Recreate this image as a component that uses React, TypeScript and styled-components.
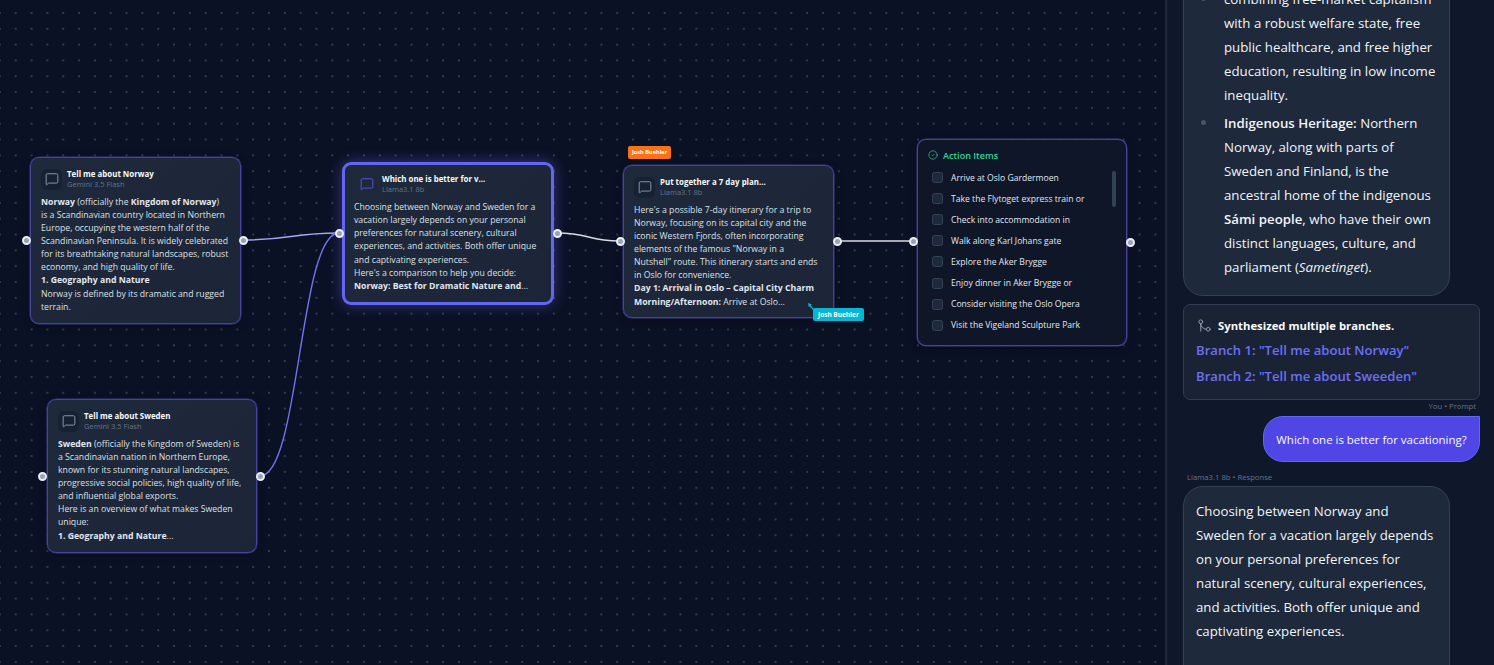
import React from "react";
import styled, { createGlobalStyle } from "styled-components";
import { MessageSquare, CircleCheck, GitMerge } from "lucide-react";

const Global = createGlobalStyle`
  html, body { margin: 0; padding: 0; height: 100%; background: #0b1122; overflow: hidden; }
  #root { height: 100%; }
  * { box-sizing: border-box; }
`;
const FONT = `"Open Sans", "Noto Sans", "Liberation Sans", sans-serif`;

const Page = styled.div`
  display: flex; width: 1494px; height: 665px; overflow: hidden; font-family: ${FONT};
`;
const Canvas = styled.div`
  position: relative; flex: 0 0 1165px; height: 100%; overflow: hidden;
  background-color: #0b1124;
  background-image: radial-gradient(circle, #2f3a4e 0.8px, transparent 1.05px);
  background-size: 15.84px 15.84px;
  background-position: -8px 5px;
`;
const Edges = styled.svg`position: absolute; inset: 0; width: 1165px; height: 665px;`;

const Node = styled.div<{ $x: number; $y: number; $w: number; $h: number; $active?: boolean; $dark?: boolean }>`
  position: absolute; left: ${p => p.$x}px; top: ${p => p.$y}px; width: ${p => p.$w}px; height: ${p => p.$h}px;
  border-radius: 9px;
  background: ${p => (p.$dark ? "#0e1628" : "linear-gradient(135deg, #1e293b, #1c2537)")};
  border: ${p => (p.$active ? "3px solid #6366f1" : "1px solid #44449f")};
  box-shadow: ${p => (p.$active ? "0 0 14px rgba(99,102,241,.45)" : "0 0 0 0.5px #3a3b8c, 0 2px 8px rgba(0,0,0,.3)")};
  padding: ${p => (p.$active ? "7px 9px" : "9px 10px")};
  color: #d1d5db;
`;
const Head = styled.div<{ $active?: boolean }>`
  display: flex; align-items: center; gap: 6px; height: 24px; margin-bottom: ${p => (p.$active ? "5px" : "4.5px")};
`;
const IconBox = styled.div<{ $active?: boolean }>`
  width: 21px; height: 21px; border-radius: 6px; display: flex; align-items: center; justify-content: center;
  background: ${p => (p.$active ? "transparent" : "#182132")};
  color: ${p => (p.$active ? "#5b5cf0" : "#94a3b8")};
  margin-left: ${p => (p.$active ? "2px" : "0")};
`;
const Titles = styled.div`display: flex; flex-direction: column; margin-left: -1px;`;
const Title = styled.div`font-size: 7.9px; line-height: 10.5px; font-weight: 700; color: #f8fafc; white-space: nowrap;`;
const Model = styled.div`font-size: 7.5px; line-height: 10.5px; color: #64748b; white-space: nowrap;`;
const Body = styled.div`font-size: 8.7px; line-height: 13.15px; color: #dbe0e7; white-space: nowrap;`;
const B = styled.b`font-weight: 700; color: #e2e8f0;`;

const Handle = styled.div<{ $x: number; $y: number }>`
  position: absolute; left: ${p => p.$x - 4.5}px; top: ${p => p.$y - 4.5}px; width: 9px; height: 9px; border-radius: 50%;
  background: #94a3b8; border: 2.4px solid #eceef2;
`;
const Tag = styled.div<{ $x: number; $y: number; $bg: string; $big?: boolean }>`
  position: absolute; left: ${p => p.$x}px; top: ${p => p.$y}px; height: ${p => (p.$big ? "13px" : "12.5px")};
  padding: ${p => (p.$big ? "0 5px" : "0 4px")};
  display: flex; align-items: center; border-radius: 2px; background: ${p => p.$bg};
  font-size: ${p => (p.$big ? "6.5px" : "5.6px")}; font-weight: 700; color: #fff; white-space: nowrap;
`;
const Cursor = styled.svg`position: absolute; left: 807px; top: 302px; width: 9px; height: 9px;`;

const ActionHead = styled.div`
  display: flex; align-items: center; gap: 5px; color: #34d399; font-size: 9.1px; font-weight: 600;
  height: 12px; margin: 0 0 6px 0;
`;
const ActionList = styled.div`display: flex; flex-direction: column; padding-left: 4px;`;
const ActionRow = styled.div`display: flex; align-items: center; gap: 8px; height: 21.1px; font-size: 8.6px; color: #e2e8f0; white-space: nowrap;`;
const Check = styled.div`width: 11px; height: 11px; border-radius: 2.5px; background: #1e293b; border: 1px solid #334155;`;
const Thumb = styled.div`position: absolute; right: 10px; top: 31px; width: 4px; height: 36px; border-radius: 2px; background: #334155;`;

const Side = styled.aside`
  flex: 1; height: 100%; overflow: hidden; background: #0f172a; border-left: 2px solid #1e293b;
  padding: 0 14px 0 16px; color: #f1f5f9;
`;
const Scroll = styled.div`display: flex; flex-direction: column; margin-top: -26px;`;
const Bubble = styled.div<{ $tall?: boolean }>`
  width: 267px; background: #1e293b; border: 1px solid #334155; border-radius: 20px; padding: 12px;
  font-size: 13.25px; line-height: 24px; color: #f1f5f9; height: ${p => (p.$tall ? "300px" : "auto")};
  b { font-weight: 600; }
`;
const List = styled.ul`margin: 0; padding: 0 0 0 28px; list-style: none;`;
const Item = styled.li`
  position: relative; margin-bottom: 4px;
  &::before { content: ""; position: absolute; left: -23px; top: 9px; width: 5px; height: 5px; border-radius: 50%; background: #475569; }
`;
const Synth = styled.div`
  margin-top: 8px; width: 297px; height: 96px; border: 1px solid #2f3c52; border-radius: 7px; background: #1a2333;
  padding: 10px 12px; display: flex; flex-direction: column;
`;
const SynthHead = styled.div`display: flex; align-items: center; gap: 6px; font-size: 11.3px; font-weight: 700; height: 21px; margin-bottom: 2px; color: #f8fafc;`;
const SynthIcon = styled.span`display: inline-flex; color: #94a3b8; margin-left: 1px;`;
const BranchLink = styled.div`font-size: 13.1px; font-weight: 600; color: #6d6ff5; height: 26px; line-height: 26px;`;
const Meta = styled.div<{ $right?: boolean }>`
  font-size: 7.7px; color: #64748b; height: 15px; line-height: 12px; margin-top: ${p => (p.$right ? "0" : "9px")};
  text-align: ${p => (p.$right ? "right" : "left")}; padding: ${p => (p.$right ? "0 4px 0 0" : "0 0 0 4px")};
`;
const UserBubble = styled.div`
  align-self: flex-end; height: 46px; width: 217px; margin-top: 1px; border-radius: 20px 0 20px 20px; background: #4f46e5;
  border: 1px solid #6366f1; font-size: 11.45px; color: #f8fafc; display: flex; align-items: center; justify-content: center;
`;

const actions = ["Arrive at Oslo Gardermoen","Take the Flytoget express train or","Check into accommodation in","Walk along Karl Johans gate","Explore the Aker Brygge","Enjoy dinner in Aker Brygge or","Consider visiting the Oslo Opera","Visit the Vigeland Sculpture Park"];

export default function App() {
  return (
    <Page>
      <Global />
      <Canvas>
        <Edges viewBox="0 0 1165 665" fill="none">
          <path d="M243 240 C 290 240, 292 233, 339 233" stroke="#a5a6f6" strokeWidth="1.6" />
          <path d="M260 476 C 300 476, 299 233, 339 233" stroke="#7073f0" strokeWidth="1.4" />
          <path d="M557 233 C 590 233, 587 241, 620 241" stroke="#d8dbe2" strokeWidth="1.4" />
          <path d="M837 241 L 913 241" stroke="#d8dbe2" strokeWidth="1.4" />
        </Edges>

        <Node $x={30} $y={157} $w={211} $h={167}>
          <Head><IconBox><MessageSquare size={14} strokeWidth={1.5} /></IconBox><Titles><Title>Tell me about Norway</Title><Model>Gemini 3.5 Flash</Model></Titles></Head>
          <Body>
            <B>Norway</B> (officially the <B>Kingdom of Norway</B>)<br />is a Scandinavian country located in Northern<br />Europe, occupying the western half of the<br />Scandinavian Peninsula. It is widely celebrated<br />for its breathtaking natural landscapes, robust<br />economy, and high quality of life.<br /><B>1. Geography and Nature</B><br />Norway is defined by its dramatic and rugged<br />terrain.
          </Body>
        </Node>

        <Node $x={47} $y={399} $w={210} $h={154}>
          <Head><IconBox><MessageSquare size={14} strokeWidth={1.5} /></IconBox><Titles><Title>Tell me about Sweden</Title><Model>Gemini 3.5 Flash</Model></Titles></Head>
          <Body>
            <B>Sweden</B> (officially the Kingdom of Sweden) is<br />a Scandinavian nation in Northern Europe,<br />known for its stunning natural landscapes,<br />progressive social policies, high quality of life,<br />and influential global exports.<br />Here is an overview of what makes Sweden<br />unique:<br /><B>1. Geography and Nature</B>...
          </Body>
        </Node>

        <Node $x={342} $y={162} $w={212} $h={143} $active>
          <Head $active><IconBox $active><MessageSquare size={14} strokeWidth={1.5} /></IconBox><Titles><Title>Which one is better for v...</Title><Model>Llama3.1 8b</Model></Titles></Head>
          <Body>
            Choosing between Norway and Sweden for a<br />vacation largely depends on your personal<br />preferences for natural scenery, cultural<br />experiences, and activities. Both offer unique<br />and captivating experiences.<br />Here's a comparison to help you decide:<br /><B>Norway: Best for Dramatic Nature and</B>...
          </Body>
        </Node>

        <Node $x={623} $y={165} $w={211} $h={153}>
          <Head><IconBox><MessageSquare size={14} strokeWidth={1.5} /></IconBox><Titles><Title>Put together a 7 day plan...</Title><Model>Llama3.1 8b</Model></Titles></Head>
          <Body>
            Here's a possible 7-day itinerary for a trip to<br />Norway, focusing on its capital city and the<br />iconic Western Fjords, often incorporating<br />elements of the famous "Norway in a<br />Nutshell" route. This itinerary starts and ends<br />in Oslo for convenience.<br /><B>Day 1: Arrival in Oslo – Capital City Charm</B><br /><B>Morning/Afternoon:</B> Arrive at Oslo...
          </Body>
        </Node>

        <Node $x={917} $y={139} $w={210} $h={207} $dark>
          <ActionHead><CircleCheck size={10} strokeWidth={1.6} />Action Items</ActionHead>
          <ActionList>
            {actions.map(a => <ActionRow key={a}><Check />{a}</ActionRow>)}
          </ActionList>
          <Thumb />
        </Node>

        <Handle $x={26} $y={240} /><Handle $x={243} $y={240} />
        <Handle $x={42} $y={476} /><Handle $x={260} $y={476} />
        <Handle $x={339} $y={233} /><Handle $x={557} $y={233} />
        <Handle $x={620} $y={241} /><Handle $x={837} $y={241} />
        <Handle $x={913} $y={241} /><Handle $x={1130} $y={242} />

        <Tag $x={628} $y={146} $bg="#f97316">Josh Buehler</Tag>
        <Tag $x={813} $y={308} $bg="#06b6d4" $big>Josh Buehler</Tag>
        <Cursor viewBox="0 0 9 9"><path d="M1 1 L4.5 2.2 L3.6 3.4 L7 7 L6 8 L2.7 4.4 L1.8 5 Z" fill="#06b6d4" /></Cursor>
      </Canvas>
      <Side>
        <Scroll>
          <Bubble>
            <List>
              <Item>combining free-market capitalism<br />with a robust welfare state, free<br />public healthcare, and free higher<br />education, resulting in low income<br />inequality.</Item>
              <Item><b>Indigenous Heritage:</b> Northern<br />Norway, along with parts of<br />Sweden and Finland, is the<br />ancestral home of the indigenous<br /><b>Sámi people</b>, who have their own<br />distinct languages, culture, and<br />parliament (<i>Sametinget</i>).</Item>
            </List>
          </Bubble>
          <Synth>
            <SynthHead><SynthIcon><GitMerge size={15} strokeWidth={1.5} /></SynthIcon>Synthesized multiple branches.</SynthHead>
            <BranchLink>Branch 1: "Tell me about Norway"</BranchLink>
            <BranchLink>Branch 2: "Tell me about Sweeden"</BranchLink>
          </Synth>
          <Meta $right>You • Prompt</Meta>
          <UserBubble>Which one is better for vacationing?</UserBubble>
          <Meta>Llama3.1 8b • Response</Meta>
          <Bubble $tall>
            Choosing between Norway and<br />Sweden for a vacation largely depends<br />on your personal preferences for<br />natural scenery, cultural experiences,<br />and activities. Both offer unique and<br />captivating experiences.
          </Bubble>
        </Scroll>
      </Side>
    </Page>
  );
}
